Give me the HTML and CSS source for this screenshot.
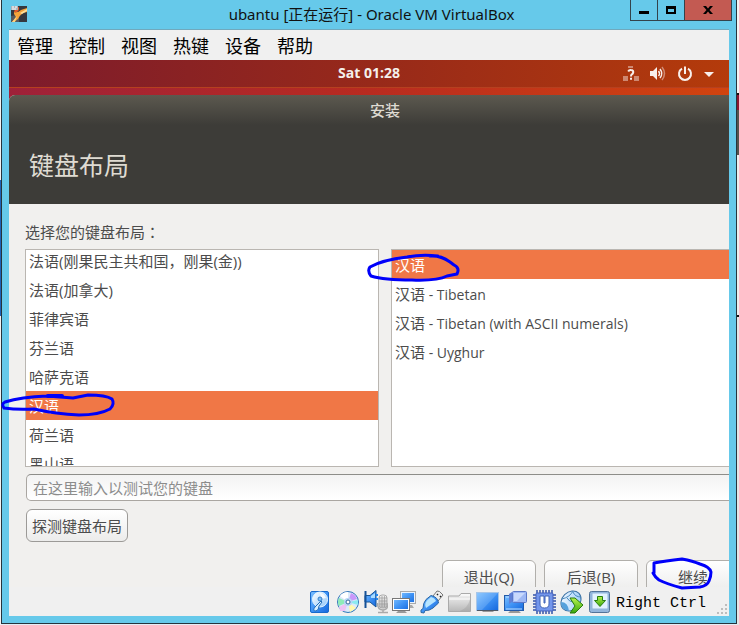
FILE: index.html
```html
<!DOCTYPE html>
<html lang="zh-CN">
<head>
<meta charset="utf-8">
<title>ubantu [正在运行] - Oracle VM VirtualBox</title>
<link rel="stylesheet" href="styles.css">
</head>
<body>
<div class="vm-window">
  <header class="titlebar">
    <svg class="app-icon" viewBox="0 0 16 16" aria-hidden="true">
      <rect width="16" height="16" fill="#35383f"/>
      <path d="M0 10L5 9L8 12V16H0z" fill="#555960"/>
      <path d="M3 6Q7 7 10 4L16 2V6L12 7Q8 10 7 13L3 16H1L5 11L3 8z" fill="#f5a33a"/>
      <path d="M3 6Q7 7 8 3V1L4 3z" fill="#e4572b"/>
      <path d="M9 7L16 3V5L11 8z" fill="#ffe09a"/>
      <path d="M6 10L4 16H1z" fill="#ffd27c"/>
      <path d="M0 0H7V4H0z" fill="#aeb4bb"/>
      <path d="M1 1H3M4 1H6M1 3H5" stroke="#fff"/>
    </svg>
    <h1 class="window-title">ubantu [正在运行] - Oracle VM VirtualBox</h1>
    <div class="window-controls">
      <button class="control" type="button" aria-label="最小化"><svg width="10" height="10" viewBox="0 0 10 10"><path d="M0 6H10V9H0z"/></svg></button>
      <button class="control" type="button" aria-label="最大化"><svg width="10" height="10" viewBox="0 0 10 10"><path d="M0 1H10V9H0zM2 4V7H8V4z" fill-rule="evenodd"/></svg></button>
      <button class="control control-close" type="button" aria-label="关闭"><svg width="10" height="10" viewBox="0 0 10 10"><path d="M0 1H3L5 3.5L7 1H10L6.5 5L10 9H7L5 6.5L3 9H0L3.5 5z"/></svg></button>
    </div>
  </header>

  <div class="window-body">
    <nav class="menubar">
      <button type="button">管理</button>
      <button type="button">控制</button>
      <button type="button">视图</button>
      <button type="button">热键</button>
      <button type="button">设备</button>
      <button type="button">帮助</button>
    </nav>

    <main class="guest">
      <div class="panel">
        <time class="clock">Sat 01:28</time>
        <div class="tray">
          <svg width="16" height="16" viewBox="0 0 16 16" aria-hidden="true">
            <path d="M0 10H5V15H0zM11 10H16V15H11zM5 0H10V2H5z" fill="#fff" opacity=".45"/>
            <path d="M5.2 5.5Q6 3.8 8 4Q10.6 4.2 10.2 6.5Q10 7.8 8.6 8.6Q8 9 8 10.5M7 12.8H9" fill="none" stroke="#fff" stroke-width="2"/>
          </svg>
          <svg width="16" height="16" viewBox="0 0 16 16" aria-hidden="true">
            <path d="M0 5H3L7 1V14L3 10H0z" fill="#fff"/>
            <path d="M8.5 5Q10.5 7.500 8.500 10M10 3Q13.500 7.500 10 12" fill="none" stroke="#fff" stroke-width="1.500"/>
            <path d="M12 1Q17 7.500 12 14" fill="none" stroke="#fff" stroke-width="1.500" opacity=".45"/>
          </svg>
          <svg width="16" height="16" viewBox="0 0 16 16" aria-hidden="true">
            <path d="M5 2.700A6 6 0 1 0 11 2.700M8 .5V8" fill="none" stroke="#fff" stroke-width="2"/>
          </svg>
          <svg width="10" height="16" viewBox="2 0 10 16" aria-hidden="true"><path d="M2 6H12L7 11z" fill="#fff"/></svg>
        </div>
      </div>

      <section class="installer">
        <header class="installer-head">
          <div class="installer-title">安装</div>
          <h2 class="page-title">键盘布局</h2>
        </header>
        <div class="installer-body">
          <p class="prompt">选择您的键盘布局<span class="colon" lang="zh-TW">：</span></p>
          <div class="lists">
            <ul class="list list-scrolled" role="listbox" aria-label="键盘布局">
              <li role="option">法语(刚果民主共和国，刚果(金))</li>
              <li role="option">法语(加拿大)</li>
              <li role="option">菲律宾语</li>
              <li role="option">芬兰语</li>
              <li role="option">哈萨克语</li>
              <li role="option" class="selected" aria-selected="true">汉语</li>
              <li role="option">荷兰语</li>
              <li role="option">黑山语</li>
            </ul>
            <ul class="list" role="listbox" aria-label="布局变体">
              <li role="option" class="selected" aria-selected="true">汉语</li>
              <li role="option">汉语<span class="latin"> - Tibetan</span></li>
              <li role="option">汉语<span class="latin"> - Tibetan (with ASCII numerals)</span></li>
              <li role="option">汉语<span class="latin"> - Uyghur</span></li>
            </ul>
          </div>
          <input class="test-field" type="text" placeholder="在这里输入以测试您的键盘" aria-label="在这里输入以测试您的键盘">
          <button class="btn detect" type="button">探测键盘布局</button>
          <div class="actions">
            <button class="btn" type="button">退出(Q)</button>
            <button class="btn" type="button">后退(B)</button>
            <button class="btn" type="button">继续</button>
          </div>
        </div>
      </section>
    </main>

    <footer class="statusbar">
      <svg class="gradients" aria-hidden="true">
        <defs>
          <linearGradient id="blue" x2="1" y2="1"><stop stop-color="#7cc0ff"/><stop offset=".5" stop-color="#3f93f5"/><stop offset="1" stop-color="#1567dc"/></linearGradient>
          <linearGradient id="pale" x2="1" y2="1"><stop stop-color="#fff"/><stop offset="1" stop-color="#8fc6fa"/></linearGradient>
          <linearGradient id="gray" x2="0" y2="1"><stop stop-color="#f4f4f4"/><stop offset="1" stop-color="#b8b8b8"/></linearGradient>
          <linearGradient id="green" x2="0" y2="1"><stop stop-color="#b5f34c"/><stop offset="1" stop-color="#39a70c"/></linearGradient>
        </defs>
      </svg>
      <svg class="status-icon" viewBox="0 0 24 24" aria-label="硬盘">
        <rect x="2.500" y="1.500" width="18" height="21" rx="1.500" fill="url(#blue)" stroke="#1769cc"/>
        <circle cx="12" cy="9.500" r="7.500" fill="url(#pale)" stroke="#e5f5ff"/>
        <path d="M12 3A7 7 0 0 1 18 8L13 9z" fill="#fff" opacity=".8"/>
        <circle cx="12" cy="9" r="2" fill="#7dbcf5" stroke="#367fc8"/>
        <path d="M13 11L7 17Q4 21 8 21Q11 20 11 16L14 12z" fill="#d9efff" stroke="#236db8"/>
      </svg>
      <svg class="status-icon" viewBox="0 0 24 24" aria-label="光驱">
        <circle cx="12" cy="12" r="10.500" fill="#dceafa" stroke="#3478ba"/>
        <path d="M12 12L4 6Q7 2 12 2z" fill="#fff"/><path d="M12 12L3 8Q1 12 3 16z" fill="#8fecb9"/><path d="M12 12L15 3Q20 5 21 9z" fill="#c998fa"/><path d="M12 12L22 10V15z" fill="#8ceaf0"/><path d="M12 12L9 21H4L3 17z" fill="#eec2f4"/><path d="M12 12L20 18L14 22z" fill="#fff9ae"/>
        <circle cx="12" cy="12" r="4" fill="#b7d7f6"/><circle cx="12" cy="12" r="2" fill="#fff" stroke="#34679a"/>
      </svg>
      <svg class="status-icon" viewBox="0 0 24 24" aria-label="声音">
        <path d="M1 5.500H6L12 .500V17L6 12H1z" fill="url(#blue)" stroke="#165496"/><path d="M1.500 1V18" stroke="#145197" stroke-width="2"/><path d="M7 6L11 3V8H7z" fill="#a9dcff"/>
        <path d="M12 5H14M12 9H14" stroke="#2388ee" stroke-width="2"/>
        <rect x="15" y="5" width="8" height="13" rx="3" fill="url(#gray)" stroke="#aaa"/>
        <path d="M15 8H23M15 11H23M15 14H23M18 6V17M20.500 6V17" stroke="#999" stroke-width=".7"/>
        <path d="M13.500 13Q13.500 20 19 20Q24 20 24 13M19 20V23M14 22.500H24" fill="none" stroke="#a9a9a9" stroke-width="1.500"/>
      </svg>
      <svg class="status-icon" viewBox="0 0 24 24" aria-label="网络">
        <path d="M15 15H20L22 18H13z" fill="#aaa"/><rect x="8.500" y="1.500" width="15" height="12" fill="url(#blue)" stroke="#aaa"/><rect x="9.500" y="2.500" width="13" height="10" fill="none" stroke="#e8f3ff"/>
        <path d="M7 20H12L15 23H4z" fill="#999"/><rect x=".5" y="8.500" width="17" height="12" fill="url(#blue)" stroke="#777"/><rect x="1.500" y="9.500" width="15" height="10" fill="none" stroke="#fff"/>
      </svg>
      <svg class="status-icon" viewBox="0 0 24 24" aria-label="USB">
        <path d="M13 6L17 1Q19 0 23 5L18 11z" fill="#eee" stroke="#777"/><path d="M17 4L18 5M20 6L21 7" stroke="#222" stroke-width="1.500"/>
        <path d="M11 5.500Q18 7 18.500 13L13 18Q9 21 5 20.500L4 23L1 22.500V20L3 18.500Q3 13 6 9.500z" fill="url(#blue)" stroke="#2c68a5"/>
        <path d="M11 7Q15 8 16 11L6 18Q4 14 7 10.500z" fill="#b7e5ff"/>
      </svg>
      <svg class="status-icon" viewBox="0 0 24 24" aria-label="共享文件夹">
        <path d="M.5 6V21.500H22.500V3.500H13L11 6z" fill="url(#gray)" stroke="#aaa"/><path d="M1 9H22M13 5H22" stroke="#fff"/><path d="M12 21Q20 18 22 9V21z" fill="#999" opacity=".35"/>
      </svg>
      <svg class="status-icon" viewBox="0 0 24 24" aria-label="显示">
        <path d="M8 20H16L18 22H6z" fill="#999"/><rect x=".5" y="2.500" width="22" height="18" fill="url(#blue)" stroke="#a8c6e8"/><path d="M1 3H22L6 20H1z" fill="#fff" opacity=".15"/><path d="M1 20.500H22" stroke="#4d5965"/>
      </svg>
      <svg class="status-icon" viewBox="0 0 24 24" aria-label="录像">
        <path d="M7 20H14L17 23H4z" fill="#999"/><rect x=".5" y="5.500" width="19" height="15" fill="url(#blue)" stroke="#235ba8"/><path d="M2 7H18M2 19H18" stroke="#bee0ff"/>
        <path d="M5 4L8 2V12L5 14z" fill="#6081d8"/><rect x="8.500" y="1.500" width="14" height="11" rx="1" fill="#9eb8f5" stroke="#5c78c8"/><path d="M10 3H21L13 11H10z" fill="#dce7ff" opacity=".7"/>
      </svg>
      <svg class="status-icon" viewBox="0 0 24 24" aria-label="处理器">
        <path d="M5 0V24M8 0V24M11 0V24M14 0V24M17 0V24M20 0V24M1 5H24M1 8H24M1 11H24M1 14H24M1 17H24M1 20H24" stroke="#3553a8" stroke-width="1.500"/>
        <rect x="4" y="3" width="17" height="18" rx="1" fill="#7396ec" stroke="#4663bd"/><path d="M8 6V14Q8 18 12.500 18Q17 18 17 14V6H13V13H12V6z" fill="#fff" stroke="#4163b5"/>
      </svg>
      <svg class="status-icon" viewBox="0 0 24 24" aria-label="鼠标集成">
        <ellipse cx="11" cy="11" rx="11" ry="9" transform="rotate(-45 11 11)" fill="url(#pale)" stroke="#386fa3"/>
        <path d="M2 9Q10 7 13 1M7 8Q9 12 14 12M13 2Q15 7 21 7" fill="none" stroke="#4888bd"/><path d="M1 12Q8 12 9 21Q1 20 1 12z" fill="#56a1dc"/>
        <path d="M10 8H15L23 15L15 23H10L15 16z" fill="url(#green)" stroke="#28790e"/>
      </svg>
      <svg class="status-icon" viewBox="0 0 24 24" aria-label="键盘捕获">
        <rect x="1.500" y="1.500" width="20" height="21" rx="2" fill="#92b6dc" stroke="#527398"/><rect x="4.500" y="3.500" width="15" height="15" rx="1" fill="#e2f2ff" stroke="#bad3ed"/>
        <path d="M9.500 6.500H14.500V10.500H17.500L12 16.500L6.500 10.500H9.500z" fill="url(#green)" stroke="#287e0e"/>
      </svg>
      <span class="host-key">Right Ctrl</span>
      <svg class="size-grip" viewBox="0 0 10 10" aria-hidden="true"><path d="M8 0h2v2h-2zM4 4h2v2h-2zM8 4h2v2h-2zM0 8h2v2h-2zM4 8h2v2h-2zM8 8h2v2h-2z" fill="#bdbdbd"/></svg>
    </footer>
  </div>
</div>

<svg class="ink" viewBox="0 0 739 625" aria-hidden="true">
  <path d="M47 396Q21 397 5 402Q1 404 4 408Q17 410 34 409Q56 414 79 415Q99 415 110 409Q115 404 112 399Q106 395 88 395L73 398L47 396"/>
  <path d="M48 396L62 396" stroke-width="4"/>
  <path d="M438 256Q422 254 407 257Q382 260 370 267Q367 271 371 276Q384 280 412 280Q437 281 447 276L457 274Q460 268 454 265L450 262Q440 255 430 256"/>
  <path d="M654 573L654 563Q665 561 682 559Q693 561 700 564Q710 567 711 572Q711 576 709 581Q707 586 700 587L682 588Q667 584 659 580Q655 577 653 573"/>
</svg>
</body>
</html>
```

FILE: styles.css
```css
* { box-sizing: border-box; }

body {
  margin: 0;
  height: 100vh;
  overflow: hidden;
  padding: 0 2px 1px 1px;
  background:
    linear-gradient(#f4f4f4 93px, #111 93px 95px, #8c1733 95px 110px, #55534d 110px 155px, #eee 155px 315px, #111 315px 317px, #e6e6e6 317px) right / 2px 100% no-repeat,
    linear-gradient(#f4f4f4 180px, #1e62b8 180px 316px, #f4f4f4 316px) left / 1px 100% no-repeat,
    #e4eef6;
  font-family: "Open Sans", "Noto Sans CJK SC", sans-serif;
  font-size: 15px;
  color: #4c4c4c;
}

button, input { font: inherit; color: inherit; }
h1, h2, p, ul { margin: 0; padding: 0; }
svg { display: block; flex: none; }

.vm-window {
  height: 100%;
  display: flex;
  flex-direction: column;
  border: 1px solid #26343c;
  border-top: 0;
  background: #66c9ea;
}

.titlebar {
  flex: none;
  height: 30px;
  display: grid;
  grid-template-columns: 1fr auto 1fr;
  align-items: start;
  padding: 0 4px 0 9px;
  color: #111;
}
.app-icon { width: 16px; height: 16px; margin-top: 6px; }
.window-title {
  font-family: "Noto Sans", "Noto Sans CJK SC", sans-serif;
  font-size: 15px;
  font-weight: 400;
  line-height: 28px;
  white-space: nowrap;
}

.window-controls { justify-self: end; display: flex; border: 1px solid #33434b; border-top: 0; }
.control {
  width: 27px;
  height: 20px;
  display: grid;
  place-items: center;
  padding: 0;
  border: 0;
  border-right: 1px solid #33434b;
  background: none;
}
.control-close { width: 46px; border-right: 0; background: #c35a52; }

.window-body {
  flex: 1;
  min-height: 0;
  display: flex;
  flex-direction: column;
  margin: 0 7px 7px;
  background: #f0f0f0;
  box-shadow: 0 -1px #70a9bd;
}

.menubar { flex: none; height: 30px; display: flex; gap: 16px; padding: 0 8px; }
.menubar button {
  padding: 0;
  border: 0;
  background: none;
  color: #000;
  font-family: "Noto Sans CJK SC", sans-serif;
  font-size: 18px;
  line-height: 30px;
}

.guest {
  flex: 1;
  min-height: 0;
  overflow: hidden;
  background: linear-gradient(90deg, #9e2139, #b82b20 50%, #d1440f);
}

.panel {
  height: 28px;
  display: grid;
  grid-template-columns: 1fr auto 1fr;
  align-items: center;
  padding: 0 15px;
  background: linear-gradient(90deg, #7d1b2c, #97291a 50%, #b43b0b);
  border-bottom: 1px solid #b6401f;
  color: #f4f0ec;
}
.clock { grid-column: 2; font-size: 14px; font-weight: 700; line-height: 26px; align-self: start; }
.tray { justify-self: end; display: flex; gap: 11px; opacity: .92; }

.installer {
  width: calc(100% + 32px);
  margin-top: 7px;
  border-radius: 6px 6px 0 0;
  overflow: hidden;
  background: #f1f0ee;
}
.installer-head {
  height: 109px;
  background: linear-gradient(#5c594f, #3d3c38 30px);
  color: #dfdbd2;
}
.installer-title { font-weight: 500; line-height: 30px; text-align: center; }
.page-title { padding: 22px 20px 0; font-size: 25px; font-weight: 400; line-height: 36px; }

.installer-body { display: flex; flex-direction: column; align-items: flex-start; padding: 18px 16px; }
.prompt { height: 20px; line-height: 20px; }
.colon { font-family: "Noto Sans CJK TC", sans-serif; }
.lists { align-self: stretch; display: grid; grid-template-columns: 1fr 1fr; gap: 12px; margin-top: 7px; }

.list {
  height: 218px;
  overflow: hidden;
  border: 1px solid #bab6b1;
  background: #fff;
  list-style: none;
  white-space: nowrap;
}
.list li { height: 29px; padding: 1px 3px 0; line-height: 28px; }
.list-scrolled { padding: 0; }
.list-scrolled li:first-child { margin-top: -4px; }
.list .selected { background: #f07746; color: #fff; }
.latin { font-size: 14px; }

.test-field {
  align-self: stretch;
  height: 27px;
  margin: 7px 0 8px 1px;
  padding: 0 6px;
  border: 1px solid #aaa6a1;
  border-top-color: #8d8d89;
  border-radius: 5px;
  background: linear-gradient(#f3f3f3, #fff);
}
.test-field::placeholder { color: #8c8c8c; opacity: 1; }

.btn {
  width: 94px;
  height: 33px;
  padding: 0;
  border: 1px solid #b1afab;
  border-radius: 6px;
  background: linear-gradient(#fff, #ececeb);
  white-space: nowrap;
}
.detect { width: 102px; margin-left: 1px; border-color: #9c9a97; }
.actions { align-self: flex-end; display: flex; gap: 8px; margin: 18px 5px 0 0; }

.statusbar {
  flex: none;
  height: 29px;
  display: flex;
  align-items: center;
  justify-content: flex-end;
  gap: 4px;
  padding-right: 2px;
  color: #000;
}
.gradients { position: absolute; width: 0; height: 0; }
.status-icon { width: 24px; height: 24px; }
.host-key { padding-top: 4px; font-family: "Liberation Mono", monospace; font-size: 15px; }
.size-grip { width: 10px; height: 10px; align-self: flex-end; margin: 0 0 2px 7px; }

.ink {
  position: absolute;
  top: 0;
  left: 0;
  width: 739px;
  height: 625px;
  pointer-events: none;
  fill: none;
  stroke: #0000fa;
  stroke-width: 3;
  stroke-linecap: round;
  stroke-linejoin: round;
}
```
